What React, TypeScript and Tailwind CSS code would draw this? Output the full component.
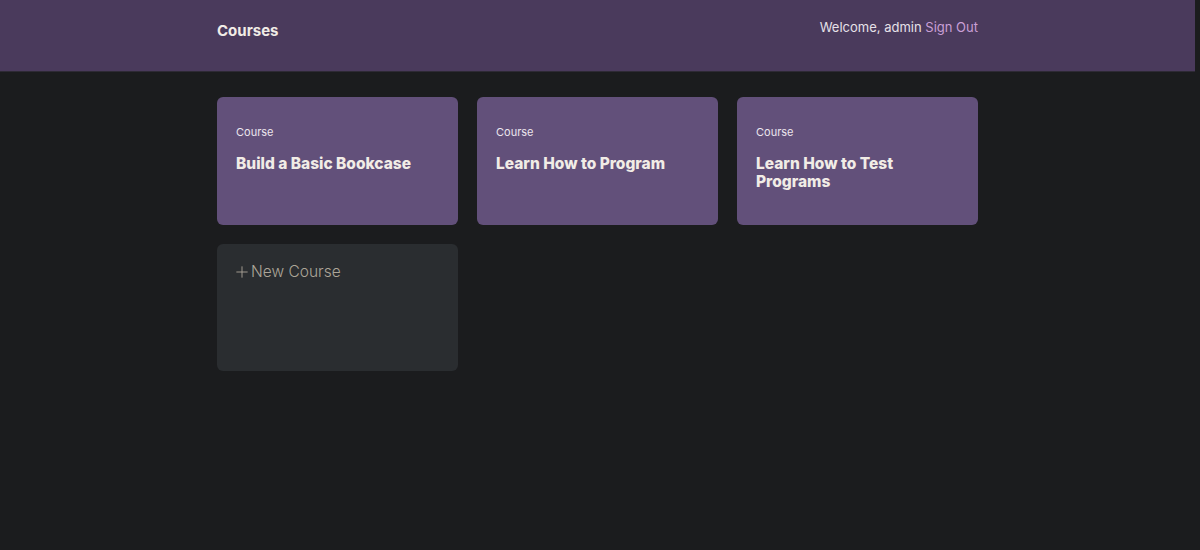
import { Plus } from "lucide-react";

const courses = [
  { id: 1, title: "Build a Basic Bookcase" },
  { id: 2, title: "Learn How to Program" },
  { id: 3, title: "Learn How to Test Programs" },
];

export default function App() {
  return (
    <div className="min-h-[550px] bg-[#1b1c1e] font-['Inter',sans-serif]">
      <div className="mr-[5px]">
        <header className="h-[72px] bg-[#4a3a5c] border-b border-[#2e2a35]">
          <div className="mx-auto flex h-full w-[761px] items-start justify-between">
            <h1 className="pt-[20px] text-[15px] font-bold text-[#f1ece6]">Courses</h1>
            <div className="pt-[18px] text-[13px] text-[#e6e0e8]">
              Welcome, admin <a className="text-[#c99fd6] cursor-pointer">Sign Out</a>
            </div>
          </div>
        </header>

        <main className="mx-auto mt-[25px] grid w-[761px] grid-cols-3 gap-[19px]">
          {courses.map((c) => (
            <div key={c.id} className="h-[128px] rounded-md bg-[#62507a] px-[19px] pt-[27px]">
              <div className="text-[11px] text-[#ece6ee]">Course</div>
              <h3 className="mt-[14px] text-[15.5px] font-extrabold leading-[18px] text-[#f1ece6]">{c.title}</h3>
            </div>
          ))}
          <div className="h-[127px] rounded-md bg-[#2a2d30] px-[16px] pt-[16px]">
            <div className="flex items-center text-[15.5px] font-light text-[#aca598]">
              <Plus className="h-[18px] w-[18px]" strokeWidth={1.2} />
              New Course
            </div>
          </div>
        </main>
      </div>
    </div>
  );
}
